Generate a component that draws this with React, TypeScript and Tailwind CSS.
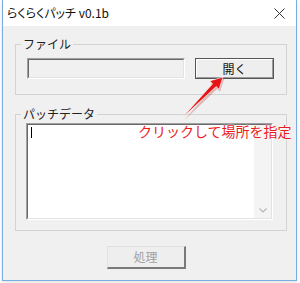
import React from "react";

const jp = "font-['Noto_Sans_CJK_JP','Noto_Sans',sans-serif]";

export default function App() {
  return (
    <div className={`relative w-[300px] h-[283px] bg-white ${jp}`}>
      <div className="ml-[2px] w-[295px] h-[281px] border-x border-b border-[#7aaee0] flex flex-col shadow-[0_1px_3px_rgba(0,0,0,0.15)]">
        {/* title bar */}
        <div className="h-[26px] bg-white flex items-center justify-between pl-[4px] pr-[11px]">
          <span className="text-[12px] leading-none text-[#111] [font-feature-settings:'palt']">
            らくらくパッチ v0.1b
          </span>
          <svg width="11" height="11" viewBox="0 0 11 11">
            <path d="M0.5 0.5 L10.5 10.5 M10.5 0.5 L0.5 10.5" stroke="#333" strokeWidth="1" />
          </svg>
        </div>
        {/* client */}
        <div className="flex-1 bg-[#f0f0f0] flex flex-col pl-[12px] pt-[10px]">
          <fieldset className="w-[272px] border border-[#d3d3d3] m-0 px-0 pt-0 pb-[15px] min-w-0">
            <legend className="ml-[5px] px-[2px] h-4 text-[12px] leading-4 text-[#222]">ファイル</legend>
            <div className="mt-[6px] pl-[11px] flex gap-[10px]">
              <div className="w-[158px] h-[21px] border-t border-l border-r border-b border-t-[#a0a0a0] border-l-[#a0a0a0] border-r-white border-b-white">
                <div className="w-full h-full bg-[#f0f0f0] border-t border-l border-r border-b border-t-[#696969] border-l-[#696969] border-r-[#e3e3e3] border-b-[#e3e3e3]" />
              </div>
              <div className="w-[79px] h-[21px] border border-[#555]">
                <div className="w-full h-full bg-[#eeeeee] border-t border-l border-r border-b border-t-white border-l-white border-r-[#9a9a9a] border-b-[#9a9a9a] flex items-center justify-center text-[12px] leading-none text-[#111]">
                  開く
                </div>
              </div>
            </div>
          </fieldset>

          <fieldset className="mt-[11px] w-[272px] border border-[#d3d3d3] m-0 px-0 pt-0 pb-[10px] min-w-0">
            <legend className="ml-[5px] px-[2px] h-4 text-[12px] leading-4 text-[#222]">パッチデータ</legend>
            <div className="mt-[1px] pl-[10px]">
              <div className="w-[247px] h-[97px] border-t border-l border-r border-b border-t-[#a0a0a0] border-l-[#a0a0a0] border-r-white border-b-white">
                <div className="w-full h-full flex border-t border-l border-r border-b border-t-[#696969] border-l-[#696969] border-r-[#e3e3e3] border-b-[#e3e3e3]">
                  <div className="flex-1 bg-white pl-[3px] pt-[2px]">
                    <div className="w-px h-[11px] bg-black" />
                  </div>
                  <div className="w-[17px] bg-[#f4f4f4] flex flex-col justify-end items-center pb-[5px]">
                    <svg width="8" height="5" viewBox="0 0 8 5">
                      <path d="M0.5 0.5 L4 4 L7.5 0.5" stroke="#b8b8b8" strokeWidth="1.2" fill="none" />
                    </svg>
                  </div>
                </div>
              </div>
            </div>
          </fieldset>

          <div className="mt-[15px] w-[272px] flex justify-center">
            <div className="ml-[-10px] w-[79px] h-[23px] border-t border-l border-r-2 border-b-2 border-t-[#e0e0e0] border-l-[#e0e0e0] border-r-[#7a7a7a] border-b-[#7a7a7a] bg-[#eeeeee] flex items-center justify-center text-[12px] leading-none text-[#a0a0a0]">
              処理
            </div>
          </div>
        </div>
      </div>

      {/* annotation overlay */}
      <svg className="absolute left-0 top-0" width="300" height="283" viewBox="0 0 300 283">
        <polygon
          points="183,119 212.6,84.8 209.8,81.9 223.5,76.5 219,90.3 216.2,87.6"
          fill="#a01010"
          opacity="0.25"
          transform="translate(1,1.5)"
        />
        <polygon
          points="182,118 212.6,83.8 209.8,80.9 223,77 219,89.3 216.2,86.6"
          fill="#e51515"
          stroke="#fff"
          strokeWidth="0.6"
          strokeLinejoin="round"
        />
      </svg>
      <div className="absolute left-[138px] top-[123px] text-[14px] leading-4 text-[#ea1a1a] whitespace-nowrap [text-shadow:0_0_2px_#fff,0_0_2px_#fff,0_0_1px_#fff]">
        クリックして場所を指定
      </div>
    </div>
  );
}
